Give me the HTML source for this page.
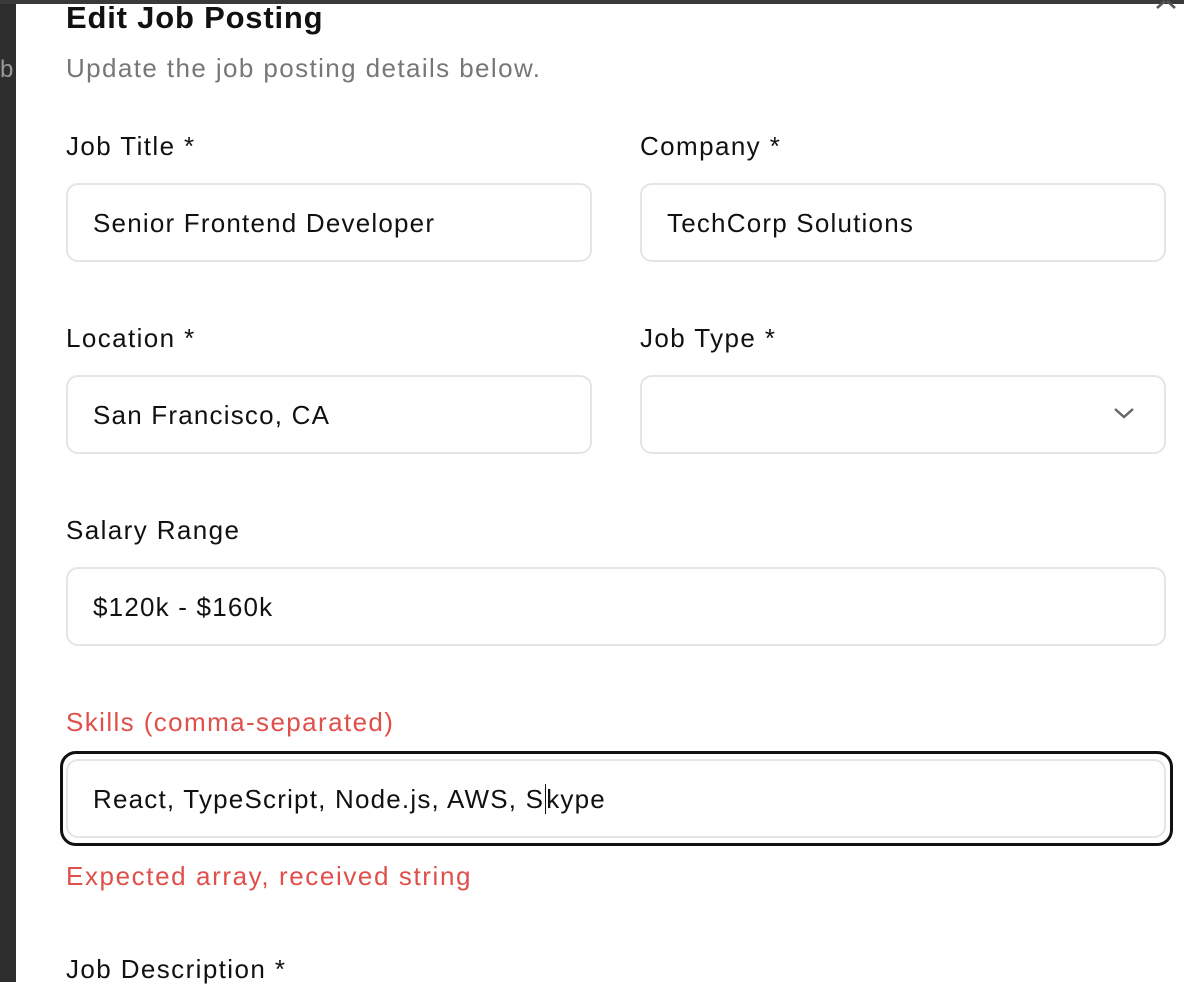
<!DOCTYPE html>
<html><head><style>
*{box-sizing:border-box;margin:0;padding:0}
body{width:1184px;height:982px;overflow:hidden;background:#fff;font-family:"Liberation Sans",sans-serif;position:relative;color:#111}
.side{position:absolute;left:0;top:0;width:16px;height:982px;background:#2e2e2e}
.top{position:absolute;left:0;top:0;width:1184px;height:4px;background:#3a3a3a}
.t{position:absolute;white-space:nowrap}
.lbl{font-size:26px;font-weight:500;color:#111;letter-spacing:1.4px}
.in{position:absolute;border:2px solid #e5e5e5;border-radius:12px;height:79px;font-size:26px;letter-spacing:1.2px;padding-left:25px;line-height:77px;color:#111}
</style></head><body>
<div class="side"></div><div class="top"></div>
<div class="t" style="left:0;top:56px;font-size:24px;color:#999;">b</div>
<svg style="position:absolute;left:1155px;top:0" width="22" height="10"><path d="M2 8 L10 1 M12 1 L20 8" stroke="#555" stroke-width="2.5" fill="none"/></svg>
<div class="t" style="left:66px;top:0px;font-size:31px;font-weight:bold;line-height:36px;letter-spacing:0.8px">Edit Job Posting</div>
<div class="t" style="left:66px;top:53px;font-size:26px;color:#777;line-height:30px;letter-spacing:1.4px">Update the job posting details below.</div>
<div class="t lbl" style="left:66px;top:131px">Job Title *</div>
<div class="t lbl" style="left:640px;top:131px">Company *</div>
<div class="in" style="left:66px;top:183px;width:526px">Senior Frontend Developer</div>
<div class="in" style="left:640px;top:183px;width:526px">TechCorp Solutions</div>
<div class="t lbl" style="left:66px;top:323px">Location *</div>
<div class="t lbl" style="left:640px;top:323px">Job Type *</div>
<div class="in" style="left:66px;top:375px;width:526px">San Francisco, CA</div>
<div class="in" style="left:640px;top:375px;width:526px"></div>
<svg style="position:absolute;left:1113px;top:406px" width="22" height="14"><path d="M2 3 L11 11 L20 3" stroke="#666" stroke-width="2.5" fill="none"/></svg>
<div class="t lbl" style="left:66px;top:515px">Salary Range</div>
<div class="in" style="left:66px;top:567px;width:1100px">$120k - $160k</div>
<div class="t lbl" style="left:66px;top:707px;color:#e0504a;font-weight:normal">Skills (comma-separated)</div>
<div style="position:absolute;left:60px;top:751px;width:1113px;height:95px;border:3px solid #111;border-radius:16px"></div>
<div class="in" style="left:66px;top:759px;width:1100px">React, TypeScript, Node.js, AWS, S<span style="border-left:1.5px solid #111;margin-left:1px"></span>kype</div>
<div class="t" style="left:66px;top:861px;font-size:26px;color:#e0504a;letter-spacing:1.6px">Expected array, received string</div>
<div class="t lbl" style="left:66px;top:954px">Job Description *</div>
</body></html>
